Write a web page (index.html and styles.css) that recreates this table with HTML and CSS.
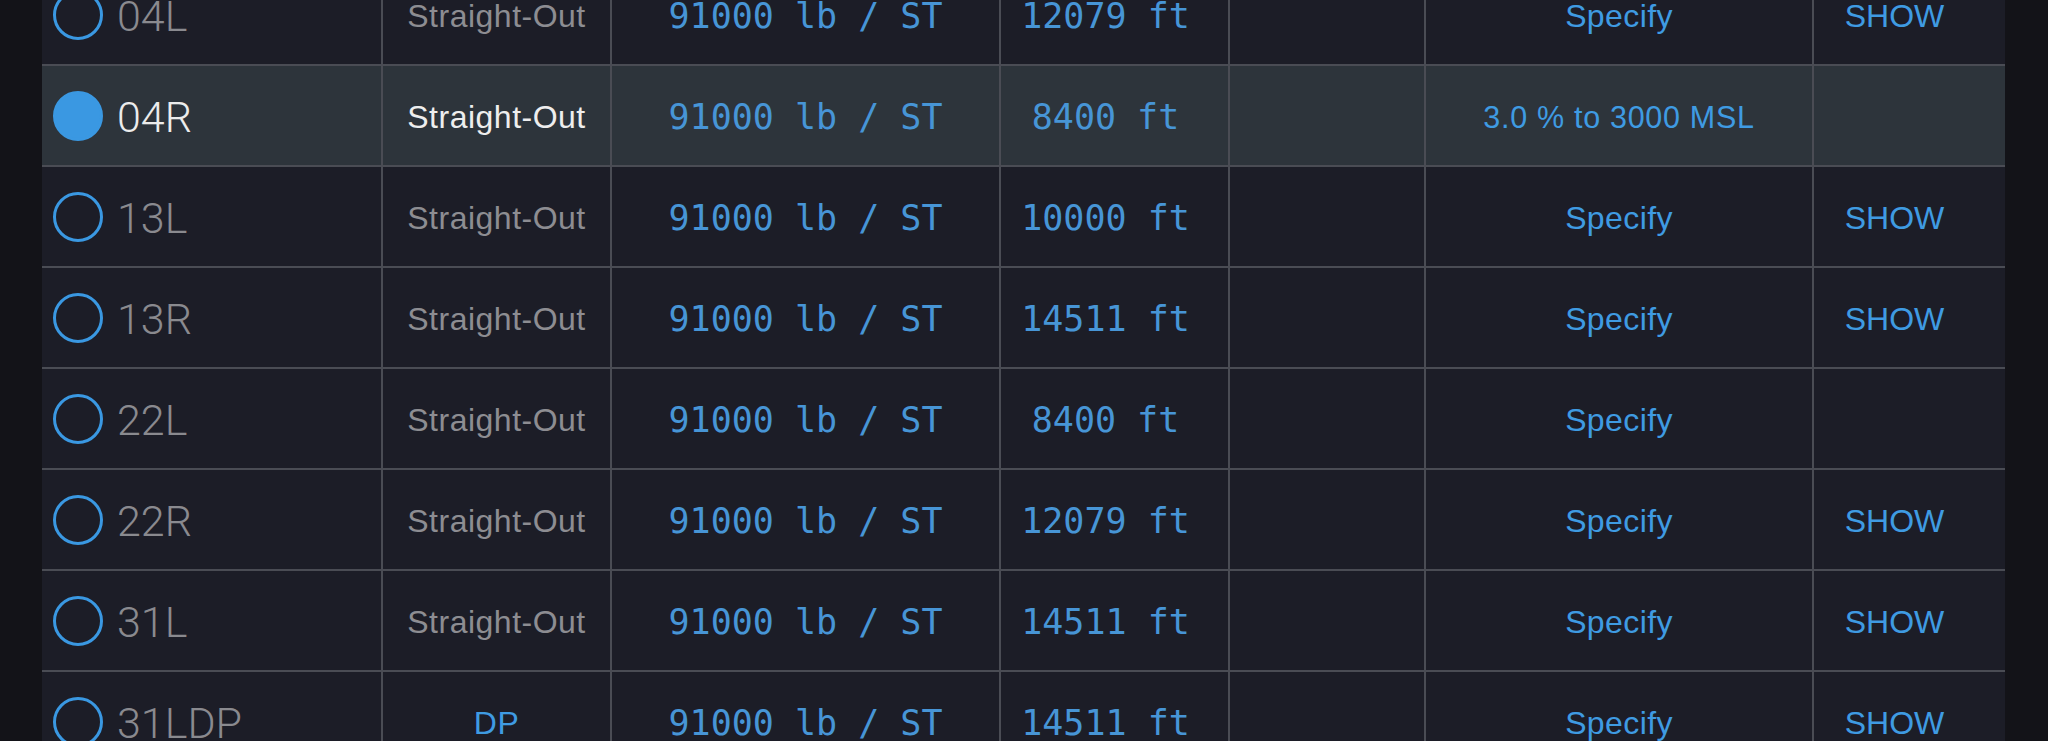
FILE: index.html
```html
<!DOCTYPE html>
<html>
<head>
<meta charset="utf-8">
<link rel="stylesheet" href="styles.css">
</head>
<body>
<div class="table">
  <div class="row">
    <div class="cell rwy"><span class="radio"></span><span class="rwy-name">04L</span></div>
    <div class="cell proc">Straight-Out</div>
    <div class="cell mono">91000 lb / ST</div>
    <div class="cell mono len">12079 ft</div>
    <div class="cell"></div>
    <div class="cell link">Specify</div>
    <div class="cell link show">SHOW</div>
  </div>
  <div class="row selected">
    <div class="cell rwy"><span class="radio on"></span><span class="rwy-name">04R</span></div>
    <div class="cell proc">Straight-Out</div>
    <div class="cell mono">91000 lb / ST</div>
    <div class="cell mono len">8400 ft</div>
    <div class="cell"></div>
    <div class="cell link small">3.0 % to 3000 MSL</div>
    <div class="cell link show"></div>
  </div>
  <div class="row">
    <div class="cell rwy"><span class="radio"></span><span class="rwy-name">13L</span></div>
    <div class="cell proc">Straight-Out</div>
    <div class="cell mono">91000 lb / ST</div>
    <div class="cell mono len">10000 ft</div>
    <div class="cell"></div>
    <div class="cell link">Specify</div>
    <div class="cell link show">SHOW</div>
  </div>
  <div class="row">
    <div class="cell rwy"><span class="radio"></span><span class="rwy-name">13R</span></div>
    <div class="cell proc">Straight-Out</div>
    <div class="cell mono">91000 lb / ST</div>
    <div class="cell mono len">14511 ft</div>
    <div class="cell"></div>
    <div class="cell link">Specify</div>
    <div class="cell link show">SHOW</div>
  </div>
  <div class="row">
    <div class="cell rwy"><span class="radio"></span><span class="rwy-name">22L</span></div>
    <div class="cell proc">Straight-Out</div>
    <div class="cell mono">91000 lb / ST</div>
    <div class="cell mono len">8400 ft</div>
    <div class="cell"></div>
    <div class="cell link">Specify</div>
    <div class="cell link show"></div>
  </div>
  <div class="row">
    <div class="cell rwy"><span class="radio"></span><span class="rwy-name">22R</span></div>
    <div class="cell proc">Straight-Out</div>
    <div class="cell mono">91000 lb / ST</div>
    <div class="cell mono len">12079 ft</div>
    <div class="cell"></div>
    <div class="cell link">Specify</div>
    <div class="cell link show">SHOW</div>
  </div>
  <div class="row">
    <div class="cell rwy"><span class="radio"></span><span class="rwy-name">31L</span></div>
    <div class="cell proc">Straight-Out</div>
    <div class="cell mono">91000 lb / ST</div>
    <div class="cell mono len">14511 ft</div>
    <div class="cell"></div>
    <div class="cell link">Specify</div>
    <div class="cell link show">SHOW</div>
  </div>
  <div class="row">
    <div class="cell rwy"><span class="radio"></span><span class="rwy-name">31LDP</span></div>
    <div class="cell proc dp">DP</div>
    <div class="cell mono">91000 lb / ST</div>
    <div class="cell mono len">14511 ft</div>
    <div class="cell"></div>
    <div class="cell link">Specify</div>
    <div class="cell link show">SHOW</div>
  </div>
</div>
</body>
</html>
```
FILE: styles.css
```css
html, body {
  margin: 0;
  padding: 0;
  height: 741px;
  overflow: hidden;
  background: #131318;
}

.table {
  margin-top: -37px;
  margin-left: 42px;
  width: 1963px;
  background: #1c1d27;
  font-family: "Liberation Sans", Arial, sans-serif;
}

.row {
  display: grid;
  grid-template-columns: 339px 229px 389px 229px 196px 388px 193px;
  height: 101px;
  border-top: 2px solid #4a4c54;
  box-sizing: border-box;
}

.row.selected {
  background: #2d343b;
}

.cell {
  display: flex;
  align-items: center;
  justify-content: center;
  padding-top: 3px;
  border-left: 2px solid #4a4c54;
  box-sizing: border-box;
}

.cell.rwy {
  border-left: none;
  justify-content: flex-start;
  padding-top: 0;
  padding-left: 11px;
  gap: 14px;
}

.radio {
  width: 50px;
  height: 50px;
  border-radius: 50%;
  border: 3px solid #3a98e2;
  box-sizing: border-box;
  flex: none;
}

.radio.on {
  background: #3a98e2;
}

.rwy-name {
  font-family: Roboto, "Liberation Sans", sans-serif;
  font-weight: 300;
  font-size: 43px;
  margin-top: 3px;
  color: #8a8a8f;
}

.selected .rwy-name {
  color: #ececec;
}

.proc {
  font-size: 32px;
  letter-spacing: 0.5px;
  color: #8d8d92;
}

.selected .proc {
  color: #eeeeee;
}

.proc.dp {
  color: #3f9be2;
}

.mono {
  font-family: "DejaVu Sans Mono", monospace;
  font-size: 35px;
  color: #4795d6;
}

.mono.len {
  padding-right: 18px;
}

.link {
  font-size: 32px;
  letter-spacing: 0.4px;
  color: #3f9be2;
}

.link.small {
  font-size: 30.5px;
  letter-spacing: 0.7px;
}

.link.show {
  padding-right: 30px;
  letter-spacing: 0;
}
```
